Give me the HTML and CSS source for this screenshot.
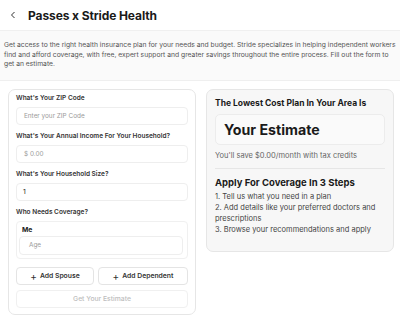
FILE: index.html
```html
<!DOCTYPE html>
<html>
<head>
<meta charset="utf-8">
<link rel="stylesheet" href="styles.css">
</head>
<body>
<header class="top">
  <span class="back"><svg width="6" height="8" viewBox="0 0 6 8"><path d="M4.5 1 L1.5 4 L4.5 7" fill="none" stroke="#333" stroke-width="1"/></svg></span>
  <h1 class="title">Passes x Stride Health</h1>
</header>
<section class="intro">
  <p>Get access to the right health insurance plan for your needs and budget. Stride specializes in helping independent workers find and afford coverage, with free, expert support and greater savings throughout the entire process. Fill out the form to get an estimate.</p>
</section>
<main class="cols">
  <div class="card form">
    <label class="lbl">What's Your ZIP Code</label>
    <div class="input ph">Enter your ZIP Code</div>
    <label class="lbl">What's Your Annual Income For Your Household?</label>
    <div class="input ph">$ 0.00</div>
    <label class="lbl">What's Your Household Size?</label>
    <div class="input val">1</div>
    <label class="lbl">Who Needs Coverage?</label>
    <div class="member">
      <div class="mname">Me</div>
      <div class="input ph age">Age</div>
    </div>
    <div class="btnrow">
      <div class="btn"><span class="plus">+</span> Add Spouse</div>
      <div class="btn"><span class="plus">+</span> Add Dependent</div>
    </div>
    <div class="btn submit">Get Your Estimate</div>
  </div>
  <div class="card result">
    <h2 class="rtitle">The Lowest Cost Plan In Your Area Is</h2>
    <div class="estimate">Your Estimate</div>
    <p class="save">You'll save $0.00/month with tax credits</p>
    <hr class="div">
    <h3 class="steps-title">Apply For Coverage In 3 Steps</h3>
    <ol class="steps">
      <li>1. Tell us what you need in a plan</li>
      <li>2. Add details like your preferred doctors and prescriptions</li>
      <li>3. Browse your recommendations and apply</li>
    </ol>
  </div>
</main>
</body>
</html>
```
FILE: styles.css
```css
* { box-sizing: border-box; }
body {
  margin: 0;
  font-family: Inter, "Noto Sans", sans-serif;
  color: #222;
  background: #fff;
  width: 400px;
}
.top {
  height: 30px;
  display: flex;
  align-items: center;
  padding-left: 10px;
}
.back { display: flex; width: 18px; }
.title {
  margin: 0;
  font-size: 12px;
  font-weight: 700;
  color: #1a1a1a;
  letter-spacing: -0.1px;
}
.intro {
  background: #fafafa;
  padding: 9px 2px 11px 4px;
  border-top: 1px solid #f0f0f0;
  border-bottom: 1px solid #efefef;
}
.intro p {
  margin: 0;
  font-size: 6.75px;
  line-height: 9.5px;
  color: #555;
}
.cols {
  display: flex;
  gap: 10px;
  padding: 8px 6px 0 8px;
  align-items: flex-start;
}
.card {
  width: 188px;
  border: 1px solid #e6e6e6;
  border-radius: 7px;
}
.form {
  padding: 4px 7px 6px;
  display: flex;
  flex-direction: column;
}
.lbl {
  font-size: 6.5px;
  font-weight: 600;
  color: #333;
  margin: 0 0 4px;
  line-height: 9px;
}
.input {
  height: 18px;
  border: 1px solid #eeeeee;
  border-radius: 4px;
  font-size: 6.4px;
  display: flex;
  align-items: center;
  padding-left: 7px;
  margin-bottom: 7px;
  background: #fff;
}
.ph { color: #9a9a9a; }
.val { color: #222; padding-left: 6px; font-size: 6.8px; }
.member {
  border: 1px solid #f0f0f0;
  border-radius: 4px;
  padding: 3px 4px 3px 2px;
  margin-bottom: 8px;
}
.mname {
  font-size: 6.8px;
  font-weight: 700;
  margin: 0 0 2px 3px;
  line-height: 9px;
}
.age { margin-bottom: 0; height: 19px; padding-left: 9px; }
.btnrow {
  display: flex;
  gap: 4px;
  margin-bottom: 5px;
}
.btn {
  height: 18px;
  border: 1px solid #e4e4e4;
  border-radius: 4px;
  font-size: 6.8px;
  font-weight: 600;
  color: #333;
  display: flex;
  align-items: center;
  justify-content: center;
  flex: 1;
}
.btnrow .btn:first-child { flex: 0 0 78px; }
.plus { font-size: 10px; font-weight: 400; margin-right: 3px; line-height: 1; }
.submit {
  border-color: #f0f0f0;
  color: #bdbdbd;
  font-weight: 500;
  flex: none;
}
.result {
  background: #f7f7f7;
  padding: 8px 8px 15px;
}
.rtitle {
  margin: 0 0 5px;
  font-size: 8.5px;
  font-weight: 700;
  color: #1a1a1a;
  line-height: 11px;
}
.estimate {
  height: 31px;
  background: #fafafa;
  border: 1px solid #ececec;
  border-radius: 5px;
  display: flex;
  align-items: center;
  padding-left: 8px;
  font-size: 14.2px;
  font-weight: 700;
  color: #1a1a1a;
}
.save {
  margin: 6px 0 0;
  font-size: 7.5px;
  color: #666;
  line-height: 10px;
}
.div {
  border: 0;
  border-top: 1px solid #e6e6e6;
  margin: 7px 0 8px;
}
.steps-title {
  margin: 0 0 2px;
  font-size: 9.5px;
  font-weight: 700;
  color: #1a1a1a;
  line-height: 12px;
}
.steps {
  list-style: none;
  margin: 0;
  padding: 0;
  font-size: 7.5px;
  color: #444;
  line-height: 11.3px;
}
```
